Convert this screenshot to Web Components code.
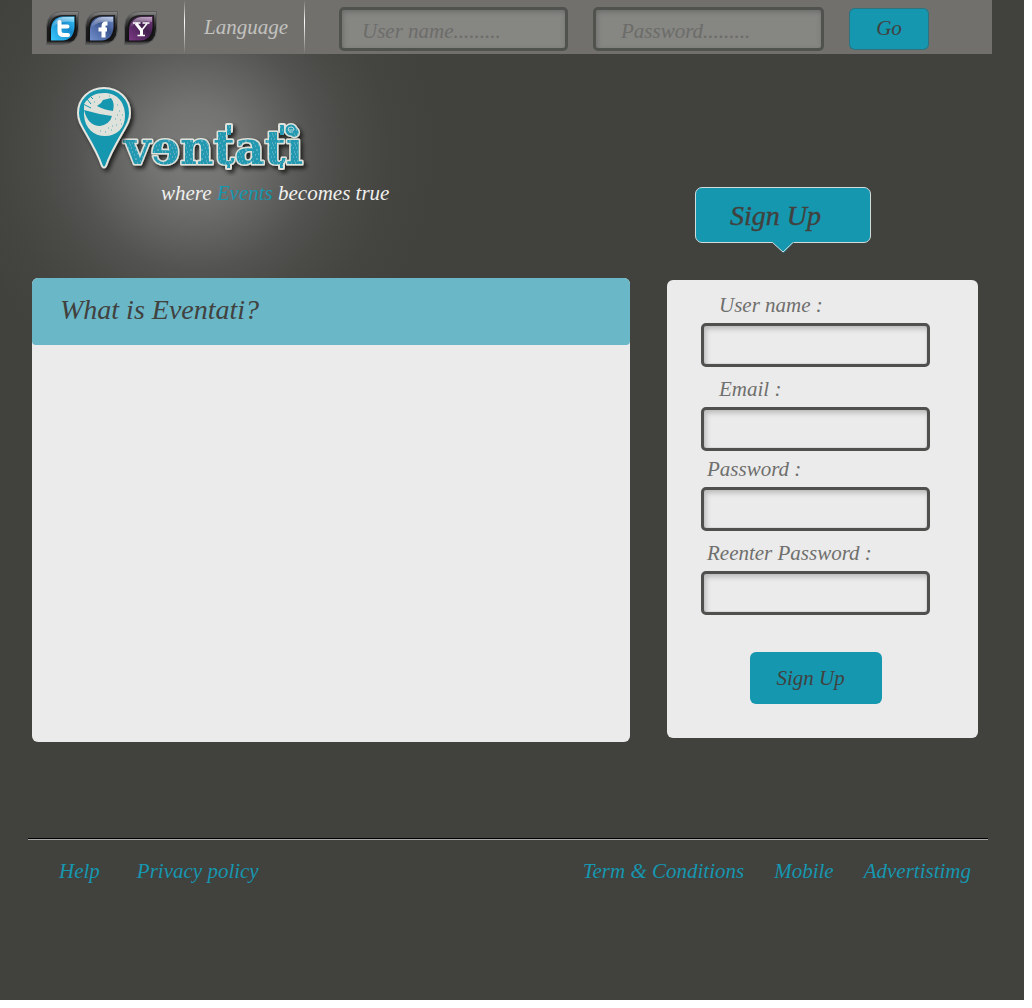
<!DOCTYPE html>
<html lang="en">
<head>
<meta charset="utf-8">
<meta name="viewport" content="width=device-width, initial-scale=1">
<title>Eventati</title>
<style>
  html { background: #fff; }
  body { margin: 0 8px 8px 0; font: italic 21px/28px "Liberation Serif", serif; color: #41413e; }
</style>
</head>
<body>
<eventati-page></eventati-page>
<script>
const define = (name, html) => {
  const template = document.createElement('template');
  template.innerHTML = html;
  customElements.define(name, class extends HTMLElement {
    constructor() {
      super();
      this.attachShadow({ mode: 'open' }).append(template.content.cloneNode(true));
    }
  });
};

/* Leaf-shaped glossy badge holding a social glyph */
const badges = {
  twitter: ['Twitter', '#1689cc', '#3acbff', '<path d="M13.500 11v9q0 4 4 4h4.500M13.500 15.500h8" fill="none" stroke="#fff" stroke-width="4" stroke-linecap="round" stroke-linejoin="round"/>'],
  facebook: ['Facebook', '#3c5690', '#7391cf', '<path d="M22.500 12.500h-1.500q-2.500 0-2.500 2.500v11.500M13.500 18.500h8.500" fill="none" stroke="#fff" stroke-width="4"/>'],
  yahoo: ['Yahoo', '#43204f', '#7d3a86', '<path d="M9 12h7.500M18.500 12h7M13.500 24.500h7.500" stroke="#fff" stroke-width="1.500"/><path d="M12 12.500l5.500 7v5" fill="none" stroke="#fff" stroke-width="3"/><path d="M23 12.500l-5.500 7" stroke="#fff" stroke-width="1.600"/>']
};
customElements.define('social-badge', class extends HTMLElement {
  constructor() { super(); this.attachShadow({ mode: 'open' }); }
  connectedCallback() {
    const [title, dark, light, glyph] = badges[this.getAttribute('kind')];
    this.shadowRoot.innerHTML = `
      <style>:host{display:block} a,svg{display:block} svg{width:33px;height:34px}</style>
      <a href="#" aria-label="${title}"><svg viewBox="0 0 33 34" aria-hidden="true">
        <defs>
          <linearGradient id="rim" x1="0" y1="0" x2="0" y2="1"><stop offset="0" stop-color="#8c8c8c"/><stop offset=".2" stop-color="#4c4c4c"/><stop offset=".5" stop-color="#1c1c1c"/><stop offset=".88" stop-color="#181818"/><stop offset="1" stop-color="#666"/></linearGradient>
          <linearGradient id="face" x1="0" y1="1" x2="1" y2="0"><stop offset="0" stop-color="${light}"/><stop offset=".6" stop-color="${dark}"/><stop offset="1" stop-color="${light}"/></linearGradient>
          <linearGradient id="gloss" x1="0" y1="0" x2="0" y2="1"><stop offset="0" stop-color="#fff" stop-opacity=".55"/><stop offset="1" stop-color="#fff" stop-opacity="0"/></linearGradient>
        </defs>
        <path d="M.5 33.500V17Q.5 .5 17 .5h15.500V17q0 16.500-16.500 16.500z" fill="url(#rim)" stroke="#5c5c5c"/>
        <path d="M3.500 30.500V18Q3.500 4 17 4h13v13q0 13.500-13.500 13.500z" fill="#111" fill-opacity=".8"/>
        <path d="M5 29.500V18Q6 6 17 5.500h11.500V16q-1 13-12 13.500z" fill="url(#face)"/>
        <path d="M6 17Q8 7 17 6h11v5Q14 9 6 17z" fill="url(#gloss)"/>
        ${glyph}</svg></a>`;
  }
});

/* Labelled text box; attributes: label, type, placeholder, tone ("bar" keeps the label for readers only) */
customElements.define('text-field', class extends HTMLElement {
  constructor() { super(); this.attachShadow({ mode: 'open' }); }
  connectedCallback() {
    const bar = this.getAttribute('tone') === 'bar';
    const label = this.getAttribute('label');
    this.shadowRoot.innerHTML = `
      <style>
        :host{display:block}
        label{display:block;height:36px;line-height:36px;padding-left:var(--indent,18px);color:#6f6f6d}
        input{display:block;box-sizing:border-box;width:100%;height:44px;margin:0;border:3px solid #50504f;border-radius:5px;
          background:#ebebeb;box-shadow:inset 2px 3px 5px #bbb,inset 0 0 1px #666;font:inherit;color:inherit;padding:0 18px;outline:0}
        :host([tone=bar]) input{border-color:#50524e;background:#868683;box-shadow:inset 1px 2px 5px #6c6c6a;padding:4px 8px 0 var(--indent,20px)}
        input::placeholder{color:#6c6c69;opacity:1}
      </style>
      ${bar ? '' : `<label for="f">${label}</label>`}
      <input id="f" type="${this.getAttribute('type') || 'text'}" ${bar ? `aria-label="${label}" placeholder="${this.getAttribute('placeholder')}"` : ''}>`;
  }
});

define('teal-button', `
  <style>
    :host{display:block}
    button{display:block;width:100%;height:100%;margin:0;border:0;border-radius:6px;background:#1597b0;color:#41413e;font:inherit;
      padding:var(--inset,0);box-shadow:var(--edge,none);cursor:pointer}
  </style><button type="button"><slot></slot></button>`);

define('top-bar', `
  <style>
    :host{display:flex;align-items:center;height:54px;background:#71706d;padding-left:14px;margin:0 32px}
    nav{display:flex;gap:6px;margin:2px 27px 0 0}
    .language{align-self:stretch;display:flex;align-items:center;width:121px;box-sizing:border-box;padding-left:20px;
      background:linear-gradient(#71706d,#fff 40%,#71706d) left/1px 100% no-repeat,linear-gradient(#71706d,#fff 40%,#71706d) right/1px 100% no-repeat}
    .language a{color:#c2c2bf;text-decoration:none}
    form{flex:0 1 590px;display:flex;align-items:center;gap:25px;margin:4px 0 0 34px}
    text-field{flex:0 1 229px}
    .pass{--indent:25px;flex-basis:231px}
    teal-button{flex:none;width:80px;height:42px;--edge:inset 0 0 0 1px #30727e;--inset:0 0 2px}
  </style>
  <nav aria-label="Social"><social-badge kind="twitter"></social-badge><social-badge kind="facebook"></social-badge><social-badge kind="yahoo"></social-badge></nav>
  <div class="language"><a href="#">Language</a></div>
  <form>
    <text-field tone="bar" label="User name" placeholder="User name........."></text-field>
    <text-field class="pass" tone="bar" label="Password" type="password" placeholder="Password........."></text-field>
    <teal-button>Go</teal-button>
  </form>`);

define('brand-mark', `
  <style>
    :host{display:block;padding:30px 0 0 43px}
    svg{display:block;width:236px;height:92px}
    p{margin:3px 0 0 86px;color:#f0f0ee;white-space:nowrap}
    span{color:#1597b0}
  </style>
  <svg viewBox="0 0 236 92" role="img" aria-label="Eventati">
    <defs>
      <pattern id="grit" width="11" height="9" patternUnits="userSpaceOnUse">
        <path d="M0 0h11v9H0z" fill="#2499b1"/>
        <path d="M1 1h1M5 3h2M9 1h1M2 5h1M7 7h1M10 5h1M4 8h1M0 7h1" stroke="#9dccd2" stroke-width=".8"/>
      </pattern>
      <filter id="drop" x="-10%" y="-10%" width="125%" height="130%"><feDropShadow dx="2.500" dy="3" stdDeviation="2" flood-color="#000" flood-opacity=".7"/></filter>
    </defs>
    <g filter="url(#drop)">
      <g fill="#dfe2da" stroke="#dfe2da" stroke-width="4" stroke-linejoin="round">
        <path d="M152 41h4v6h-4zM205 41h4v6h-4zM152 80h3v4h-3zM205 80h3v4h-3z"/>
        <circle cx="216" cy="46" r="5"/>
      </g>
      <text x="49" y="80" font-family="DejaVu Serif" font-style="normal" font-weight="bold" font-size="46" fill="url(#grit)" stroke="#dfe2da" stroke-width="3" stroke-linejoin="round" paint-order="stroke">vɘntati</text>
      <g fill="url(#grit)">
        <path d="M152 41h4v10h-4zM205 41h4v10h-4zM152 77h3v7h-3zM205 77h3v7h-3z"/>
        <circle cx="216" cy="46" r="5.500"/>
      </g>
      <path d="M213 46h6q0-3-3-3t-3 3q1 3 5 2" fill="none" stroke="#b4d5d8" stroke-width="1"/>
    </g>
    <g filter="url(#drop)">
      <path d="M29 4C14 4 3 15 3 29c0 7 3 12 7 19 7 12 13 22 17 34q2 3 4 0c4-12 10-22 17-34 4-7 7-12 7-19C55 15 44 4 29 4z" fill="#1597b0" stroke="#e3e5de" stroke-width="2"/>
      <path d="M9 20C14 12 21 9 29 9c14 0 21 10 21 23 0 12-8 20-20 20-11 0-20-7-21-21z" fill="#dfe2da"/>
      <path d="M9 26Q22 30 37 32 35 40 25 42 13 42 9 26zM22 22L26 19 28 16 36 14Q40 19 38 27 29 26 22 22z" fill="#1597b0"/>
      <path d="M8 20l8 4M12 15l4 5M16 13l2 2" stroke="#1597b0"/>
      <path d="M30 48h1M36 46h1M41 41h1M45 36h1M40 35h1M44 27h1M47 31h1M42 21h1M37 42h1M25 47h1M34 12h1M24 13h1M19 18h1M46 40h1M33 44h1M42 31h1" stroke="#56aebd" stroke-width="1.200"/>
    </g>
  </svg>
  <p>where <span>Events</span> becomes true</p>`);

define('speech-title', `
  <style>
    :host{display:block;width:176px}
    h2{margin:0;box-sizing:border-box;height:56px;border:1px solid #d3dcdc;border-radius:7px;background:#1597b0;
      font-size:28px;line-height:56px;font-weight:400;-webkit-text-stroke:.4px #41413e;padding-left:34px}
    svg{display:block;width:22px;height:11px;margin:-1px auto 0}
  </style>
  <h2><slot></slot></h2>
  <svg viewBox="0 0 22 11" aria-hidden="true"><path d="M0 0h22L12 10.500h-1z" fill="#1597b0"/><path d="M.5 .5l10.500 9.500L21 .5" fill="none" stroke="#d3dcdc"/></svg>`);

define('info-panel', `
  <style>
    :host{display:block;min-height:464px;border-radius:6px;background:#ebebeb}
    h1{margin:0;height:67px;box-sizing:border-box;padding:0 28px;border-radius:6px 6px 4px 4px;background:#6ab7c8;
      font-size:28px;line-height:64px;font-weight:400}
  </style>
  <h1><slot name="title"></slot></h1><slot></slot>`);

define('signup-form', `
  <style>
    :host{display:block;border-radius:6px;background:#ebebeb}
    form{padding:7px 48px 34px 34px}
    fieldset{display:grid;gap:4px;margin:0;padding:0;border:0;min-width:0}
    .secret{--indent:6px}
    teal-button{width:132px;height:52px;margin:37px auto 0;--inset:0 10px 0 0}
  </style>
  <form>
    <fieldset><text-field label="User name :"></text-field><text-field label="Email :" type="email"></text-field></fieldset>
    <fieldset class="secret"><text-field label="Password :" type="password"></text-field><text-field label="Reenter Password :" type="password"></text-field></fieldset>
    <teal-button>Sign Up</teal-button>
  </form>`);

define('page-footer', `
  <style>
    :host{display:flex;justify-content:space-between;margin:96px 36px 0 28px;padding:18px 17px 0 31px;border-top:1px solid #000;box-shadow:inset 0 1px #aaa}
    nav{display:flex;gap:30px}
    nav:first-of-type{gap:37px}
    a{color:#1597b0;text-decoration:none}
  </style>
  <nav><a href="#">Help</a><a href="#">Privacy policy</a></nav>
  <nav><a href="#">Term &amp; Conditions</a><a href="#">Mobile</a><a href="#">Advertistimg</a></nav>`);

define('eventati-page', `
  <style>
    :host{display:block;min-height:calc(100vh - 8px);background:radial-gradient(circle at 195px 150px,#7c7c7a 0,#737371 45px,#626260 85px,#535351 120px,#4a4a47 155px,#444441 195px,#41413e 240px) #41413e}
    main{display:grid;grid-template-columns:minmax(0,1fr) 311px;grid-template-rows:224px auto;column-gap:37px;align-items:start;margin:0 46px 0 32px}
    speech-title{align-self:end;margin:0 0 25px 28px}
    signup-form{margin-top:2px}
  </style>
  <top-bar></top-bar>
  <main>
    <brand-mark></brand-mark>
    <speech-title>Sign Up</speech-title>
    <info-panel><span slot="title">What is Eventati?</span></info-panel>
    <signup-form></signup-form>
  </main>
  <page-footer></page-footer>`);
</script>
</body>
</html>
